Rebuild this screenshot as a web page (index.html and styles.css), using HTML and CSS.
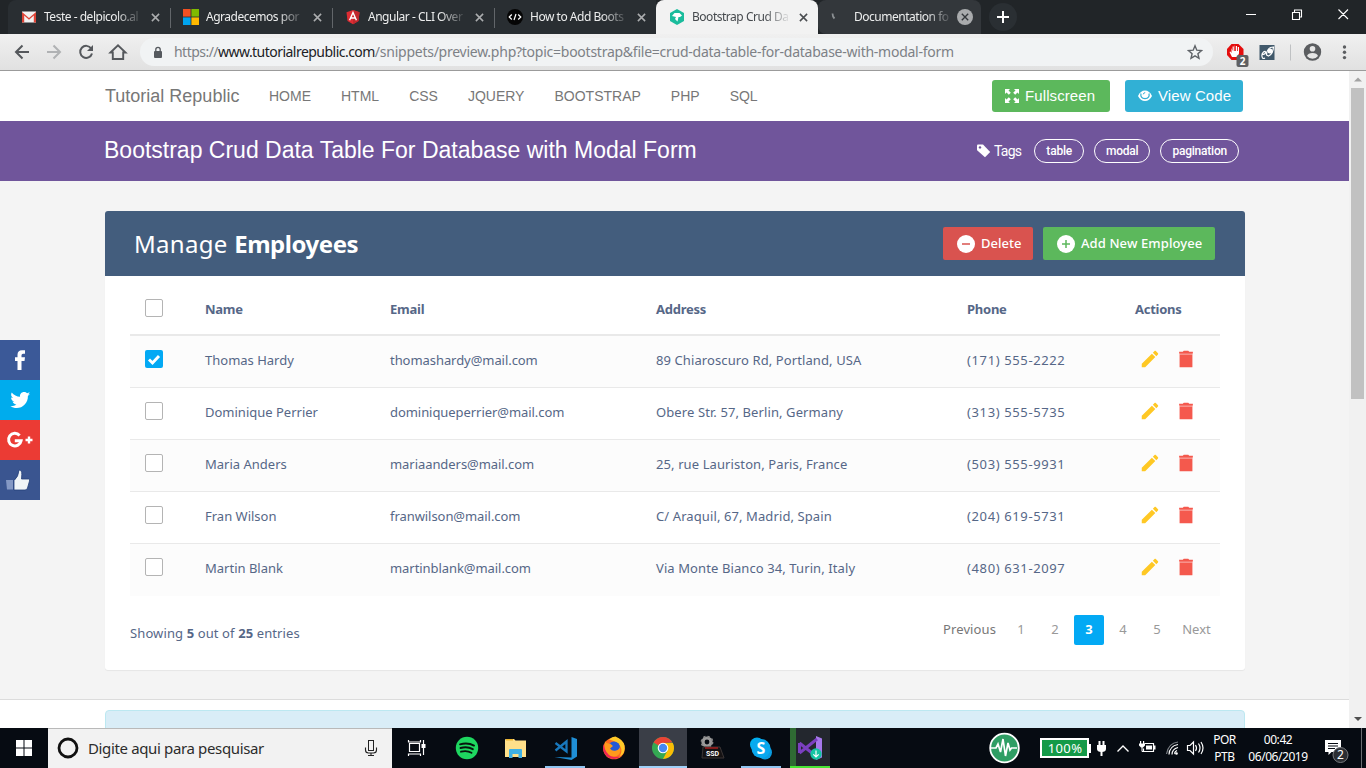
FILE: index.html
```html
<!DOCTYPE html>
<html lang="pt-BR">
<head>
<meta charset="utf-8">
<title>Bootstrap Crud Data Table</title>
<link rel="stylesheet" href="styles.css">
</head>
<body>
<svg class="defs" aria-hidden="true">
  <symbol id="x" viewBox="0 0 10 10"><path d="M1 1l8 8M9 1l-8 8" fill="none" stroke="currentColor" stroke-width="1.7"/></symbol>
  <symbol id="pen" viewBox="0 0 24 24"><path d="M3 17.25V21h3.75L17.81 9.94l-3.75-3.75L3 17.25zM20.71 7.04c.39-.39.39-1.02 0-1.41l-2.34-2.34c-.39-.39-1.02-.39-1.41 0l-1.83 1.83 3.75 3.75 1.83-1.83z"/></symbol>
  <symbol id="bin" viewBox="0 0 24 24"><path d="M5 6v15h14V6zM19.500 4H15.500l-1-1h-5l-1 1H4.500v2h15V4z"/><path d="M5 6h14v1.500H5z" fill="#fff" opacity=".4"/></symbol>
</svg>

<div class="tabs">
  <div class="tab"><svg class="fav" viewBox="0 0 16 16"><path d="M1 2.500h14v11H1z" fill="#f2f2f2"/><path d="M1 13.500V3l7 6 7-6v10.500h-2.200V6.500L8 10.700 3.200 6.500v7z" fill="#dc4437"/></svg><span class="tt">Teste - delpicolo.al</span><svg class="tx"><use href="#x"/></svg></div>
  <div class="tab sep"><svg class="fav" viewBox="0 0 16 16"><path d="M0 0h7.600v7.600H0z" fill="#f25022"/><path d="M8.400 0H16v7.600H8.400z" fill="#7fba00"/><path d="M0 8.400h7.600V16H0z" fill="#00a4ef"/><path d="M8.400 8.400H16V16H8.400z" fill="#ffb900"/></svg><span class="tt">Agradecemos por</span><svg class="tx"><use href="#x"/></svg></div>
  <div class="tab sep"><svg class="fav" viewBox="0 0 16 16"><path d="M8 1l6.500 2.300-1 8.700L8 15.200 2.500 12l-1-8.700z" fill="#dd2c33"/><path d="M8 1l6.500 2.300-1 8.700L8 15.200z" fill="#c1272d"/><path d="M4.600 11.300L8 3.500l3.400 7.800M5.900 9h4.200" fill="none" stroke="#fff" stroke-width="1.400"/></svg><span class="tt">Angular - CLI Over</span><svg class="tx"><use href="#x"/></svg></div>
  <div class="tab sep"><svg class="fav" viewBox="0 0 16 16"><circle cx="8" cy="8" r="8" fill="#050505"/><path d="M4.800 5.500L2.200 8l2.600 2.500M11.200 5.500L13.800 8l-2.600 2.500M9 5l-2 6" fill="none" stroke="#fff" stroke-width="1.200"/></svg><span class="tt">How to Add Boots</span><svg class="tx"><use href="#x"/></svg></div>
  <div class="tab active"><svg class="fav" viewBox="0 0 16 16"><path d="M8 0l7 4v8l-7 4-7-4V4z" fill="#1abc9c"/><path d="M3 7l2.500-3h5L13 6.500l-2 1.500H9.500l-1 4.500L6 10l1-2z" fill="#fff"/></svg><span class="tt">Bootstrap Crud Da</span><svg class="tx"><use href="#x"/></svg></div>
  <div class="tab last"><svg class="fav" viewBox="0 0 16 16"><path d="M1.500 4.500q0 3 2 5" fill="none" stroke="#8b8f92" stroke-width="1.800"/></svg><span class="tt">Documentation fo</span><span class="xc"><svg><use href="#x"/></svg></span></div>
  <div class="plus"><svg viewBox="0 0 28 28"><path d="M14 8v12M8 14h12" stroke="#fff" stroke-width="2"/></svg></div>
  <svg class="winbtns" viewBox="0 0 108 20"><path d="M0 10.500h10M46.500 8.500h7v7h-7zM48.500 8v-2h7v7h-2M92.500 5.500l9.500 9.500M102 5.500L92.500 15" fill="none" stroke="#fff" stroke-width="1.100"/></svg>
</div>

<div class="toolbar">
  <svg class="navs" viewBox="0 0 132 32" fill="none" stroke-width="2">
    <path d="M29 16H16M22.500 9.500L16 16l6.500 6.500" stroke="#55585c"/>
    <path d="M47 16h13M53.500 9.500L60 16l-6.500 6.500" stroke="#b0b2b4"/>
    <path d="M91.200 12.500A6 6 0 1 0 92 17.500" stroke="#55585c"/><path d="M93 9v6h-6z" fill="#55585c"/>
    <path d="M110.500 16.500L118 9.300l7.500 7.200h-2.300V23h-10.400v-6.500z" stroke="#55585c" stroke-width="1.900"/>
  </svg>
  <div class="url">
    <svg class="lock" viewBox="0 0 10 13"><rect x="1" y="5" width="8" height="7" rx="1" fill="#55595e"/><path d="M2.800 6V3.500a2.200 2.200 0 0 1 4.400 0V6" fill="none" stroke="#55595e" stroke-width="1.300"/></svg>
    <span class="addr"><span class="host"><span class="dim">https://</span>www.tutorialrepublic.com</span><span class="dim">/snippets/preview.php?topic=bootstrap&amp;file=crud-data-table-for-database-with-modal-form</span></span>
    <svg class="star" viewBox="0 0 16 16"><path d="M8 1.800l1.800 4.400 4.700.4-3.600 3.100 1.100 4.600L8 11.900l-4 2.400 1.100-4.600-3.600-3.100 4.700-.4z" fill="none" stroke="#5f6368" stroke-width="1.400"/></svg>
  </div>
  <svg class="exts" viewBox="0 0 153 34">
    <g transform="translate(11 0)"><path d="M7.500 9h7l5 5v6l-5 5h-7l-4.500-5v-6z" fill="#e40d0d"/><path d="M7.500 13v5l-1-1.500-1 .5 2.500 5h5l2-3.500V12h-1.200v4h-.8v-5h-1.200v5h-.8v-5.500H10.700V16h-.9v-4.500H8.600V16z" fill="#fff"/></g>
    <g transform="translate(12.500 0)"><rect x="11" y="20" width="12" height="12" rx="2" fill="#5f6063"/><text x="17" y="30" class="bdg">2</text>
    <rect x="34" y="10" width="15" height="15" fill="#41596b"/><path d="M36 19.500q4 0 4-2t-2-.5-1.500 4.500 3 1.500M41 20c0-5 3-8 7-8-.500 5-2 8-5 9z" fill="none" stroke="#fff" stroke-width="1.200"/><circle cx="44.500" cy="16" r="2.500" fill="#fff"/></g>
    <path d="M77.500 9.500v16" stroke="#bfc1c3"/>
    <circle cx="99.500" cy="17" r="8.700" fill="#5b5d60"/><circle cx="99.500" cy="13.800" r="2.800" fill="#e6e6e6"/><path d="M94 21q1-3 5.500-3t5.500 3q-2 2.700-5.500 2.700T94 21z" fill="#e6e6e6"/>
    <g fill="#5b5d60"><circle cx="131.500" cy="12" r="1.700"/><circle cx="131.500" cy="17.300" r="1.700"/><circle cx="131.500" cy="22.600" r="1.700"/></g>
  </svg>
</div>

<div class="viewport">
  <div class="page">
    <nav class="topnav">
      <span class="brand">Tutorial Republic</span>
      <span class="links"><a>HOME</a><a>HTML</a><a>CSS</a><a>JQUERY</a><a>BOOTSTRAP</a><a>PHP</a><a>SQL</a></span>
      <span class="btn green"><svg viewBox="0 0 14 14"><path d="M0 0h5L3.500 1.500l2.300 2.300-2 2L1.500 3.500 0 5zM14 0v5l-1.500-1.500-2.300 2.300-2-2 2.300-2.300L9 0zM0 14V9l1.500 1.500 2.300-2.300 2 2-2.300 2.300L5 14zM14 14H9l1.500-1.500-2.300-2.300 2-2 2.300 2.300L14 9z" fill="#fff"/></svg>Fullscreen</span>
      <span class="btn blue"><svg viewBox="0 0 14 14"><path d="M0 7q2.500-5.500 7-5.500T14 7q-2.500 5-7 5T0 7z" fill="#fff"/><path d="M3 4.500Q2 9 7 9.700 12 9 11 4.500" fill="none" stroke="#31b0d5" stroke-width="1.200"/><path d="M5.300 5.300q.2-1.600 1.900-1.700" fill="none" stroke="#31b0d5" stroke-width="1"/></svg>View Code</span>
    </nav>
    <header class="hero">
      <h1>Bootstrap Crud Data Table For Database with Modal Form</h1>
      <div class="tags"><svg viewBox="0 0 14 14"><path d="M0 1.500Q0 .5 1 .5h5L13.200 8 8 13.300.4 6.400Q0 6 0 5.500z" fill="#fff"/><circle cx="3" cy="3.400" r="1.200" fill="#70559b"/></svg><span class="tl">Tags</span><span class="pill">table</span><span class="pill">modal</span><span class="pill">pagination</span></div>
    </header>
    <main class="stage">
      <section class="card">
        <div class="cardhead">
          <h2>Manage <b>Employees</b></h2>
          <span class="act red"><svg viewBox="0 0 18 18"><circle cx="9" cy="9" r="9" fill="#fff"/><path d="M5 9h8" stroke="#d9534f" stroke-width="1.500"/></svg><span>Delete</span></span>
          <span class="act grn"><svg viewBox="0 0 18 18"><circle cx="9" cy="9" r="9" fill="#fff"/><path d="M5 9h8M9 5v8" stroke="#5cb85c" stroke-width="1.500"/></svg><span>Add New Employee</span></span>
        </div>
        <table>
          <colgroup><col class="c1"><col class="c2"><col class="c3"><col class="c4"><col class="c5"><col class="c6"></colgroup>
          <thead><tr><th><i class="cb"></i></th><th>Name</th><th>Email</th><th>Address</th><th>Phone</th><th>Actions</th></tr></thead>
          <tbody>
            <tr><td><i class="cb on"><svg viewBox="0 0 18 18"><path d="M4 9.500l3.500 3.500L14 6" fill="none" stroke="#fff" stroke-width="2.900"/></svg></i></td><td>Thomas Hardy</td><td>thomashardy@mail.com</td><td>89 Chiaroscuro Rd, Portland, USA</td><td>(171) 555-2222</td><td><svg class="pen"><use href="#pen"/></svg><svg class="bin"><use href="#bin"/></svg></td></tr>
            <tr><td><i class="cb"></i></td><td>Dominique Perrier</td><td>dominiqueperrier@mail.com</td><td>Obere Str. 57, Berlin, Germany</td><td>(313) 555-5735</td><td><svg class="pen"><use href="#pen"/></svg><svg class="bin"><use href="#bin"/></svg></td></tr>
            <tr><td><i class="cb"></i></td><td>Maria Anders</td><td>mariaanders@mail.com</td><td>25, rue Lauriston, Paris, France</td><td>(503) 555-9931</td><td><svg class="pen"><use href="#pen"/></svg><svg class="bin"><use href="#bin"/></svg></td></tr>
            <tr><td><i class="cb"></i></td><td>Fran Wilson</td><td>franwilson@mail.com</td><td>C/ Araquil, 67, Madrid, Spain</td><td>(204) 619-5731</td><td><svg class="pen"><use href="#pen"/></svg><svg class="bin"><use href="#bin"/></svg></td></tr>
            <tr><td><i class="cb"></i></td><td>Martin Blank</td><td>martinblank@mail.com</td><td>Via Monte Bianco 34, Turin, Italy</td><td>(480) 631-2097</td><td><svg class="pen"><use href="#pen"/></svg><svg class="bin"><use href="#bin"/></svg></td></tr>
          </tbody>
        </table>
        <div class="foot">
          <span class="hint">Showing <b>5</b> out of <b>25</b> entries</span>
          <div class="pager"><span class="prev">Previous</span><span>1</span><span>2</span><span class="cur">3</span><span>4</span><span>5</span><span class="next">Next</span></div>
        </div>
      </section>
    </main>
    <div class="below"><div class="info"></div></div>
    <div class="social">
      <span class="fb"><svg viewBox="0 0 40 40"><path d="M17.500 30v-9H15v-3.700h2.500v-2.500q0-4.600 4.500-4.600h3v3.600h-2q-1.500 0-1.500 1.500v2H25l-.5 3.700h-3v9z" fill="#fff"/></svg></span>
      <span class="tw"><svg viewBox="0 0 40 40"><path d="M30 13.800l-2.100 2.100c.2 6.800-5 12.100-11.200 12.100-2.300 0-4.500-.6-6.300-1.800 2.200.2 4.300-.4 6-1.700-1.800-.1-3.300-1.200-3.800-2.900.6.1 1.200.1 1.800-.1-2-.4-3.300-2-3.300-4.100.6.300 1.200.5 1.900.5-1.900-1.300-2.400-3.600-1.300-5.400 2.100 2.600 5 4.100 8.400 4.300-.6-2.600 1.300-4.900 4-4.900 1.200 0 2.200.5 3 1.300l2.600-1c-.3 1-1 1.700-1.800 2.200z" fill="#fff"/></svg></span>
      <span class="gp"><svg viewBox="0 0 40 40" fill="none" stroke="#fff"><path d="M19.600 15.400a6.300 6.300 0 1 0 1.500 5.300h-6.300" stroke-width="3"/><path d="M25.500 20h7M29 16.500v7" stroke-width="2.400"/></svg></span>
      <span class="lk"><svg viewBox="0 0 40 40"><path d="M6 20h7v9.500H7z" fill="#8498c4"/><path d="M14 20.500q4.500-3.500 5-10.500 3 0 2.800 4.500L21.500 19h7q1.500 0 1 2l-2 7q-.5 2-2.500 2H14z" fill="#f1f5f7" stroke="#25407a" stroke-width=".8"/></svg></span>
    </div>
  </div>
  <div class="scroll"><svg viewBox="0 0 17 17"><path d="M5 10.500L9 6.500l4 4z" fill="#a3a3a3"/></svg><i></i><svg viewBox="0 0 17 17"><path d="M5 6l4 4 4-4z" fill="#505050"/></svg></div>
</div>

<div class="taskbar">
  <div class="start"><svg viewBox="0 0 16 16"><path d="M0 0h7.500v7.500H0zM8.500 0H16v7.500H8.500zM0 8.500h7.500V16H0zM8.500 8.500H16V16H8.500z" fill="#fff"/></svg></div>
  <div class="search"><svg class="ring" viewBox="0 0 22 22"><circle cx="11" cy="11" r="9" fill="none" stroke="#111" stroke-width="2.800"/></svg><span>Digite aqui para pesquisar</span><svg class="mic" viewBox="0 0 14 18"><rect x="4.500" y="1.500" width="5" height="10" fill="none" stroke="#222"/><path d="M1.500 8.500v2.500q0 3 3 3h5q3 0 3-3V8.500M7 14v3M4 16.500h6" fill="none" stroke="#222" stroke-width="1.100"/></svg></div>
  <svg class="apps" viewBox="392 728 440 40">
    <g fill="none" stroke="#fff" stroke-width="1.200"><path d="M409.500 743.500h10v8h-10zM408.500 740v2h12v-2M408.500 756v-2h12v2M423.500 740v15"/></g><path d="M421.500 744h4v4h-4z" fill="#fff"/>
    <circle cx="467" cy="748" r="11.200" fill="#1ed760"/><path d="M460 744.300q8-2.200 14 1.300M460.500 748q7-1.800 12.300 1.200M461 751.700q6-1.500 10.500 1.100" fill="none" stroke="#07140c" stroke-width="1.900" stroke-linecap="round"/>
    <path d="M505 740q0-1 1-1h8l1.500 1.500H526V757h-21z" fill="#ffe08a"/><path d="M506 739h7v1.500h-7z" fill="#efb72f"/><path d="M509 758v-8q0-1 1-1h11q1 0 1 1v8h-3.500v-4h-6v4z" fill="#3fb1e5"/>
    <path d="M571.500 737l5.500 2v17.500l-5.500 3.500-17-3 17 .5z" fill="#1f8fd6"/><path d="M555.500 743l11 8.500V741.500L555.500 750.500" fill="none" stroke="#1878bd" stroke-width="2.300"/>
    <path d="M545 766h40v2h-40zM741 766h40v2h-40z" fill="#8fc4f0"/>
    <circle cx="614" cy="748.500" r="10.800" fill="#ff6a1f"/><path d="M609 739.500q3-3 6.500-3 7.500 3 9 9 1.500 8-6 12.300 5-6 1.500-12-2-4-11-6.300z" fill="#ffc928"/><circle cx="614" cy="747.500" r="6" fill="#2459d6"/><path d="M605 741q1 3 5 2.500l3 2.500-3 2.500q2 3 6 2 3.500-1 4-4 2 9-6 10-9 0-9.500-9z" fill="#ff9a1c"/><path d="M603.500 744q-2 8 4 13 8 4.500 14-1.500-4 2.500-10 1-6-2.500-8-12.500z" fill="#ee2555"/>
    <path d="M639 728h48v40h-48z" fill="#3a3e47"/><path d="M639 766h48v2h-48z" fill="#9fd0f8"/>
    <circle cx="663" cy="748" r="11" fill="#34a853"/><path d="M663 748l-9.500-5.500A11 11 0 0 1 672.500 742.500L663 743z" fill="#ea4335"/><path d="M663 743h9.800A11 11 0 0 1 663 759l4.500-8.500z" fill="#fbbc05"/><circle cx="663" cy="748" r="5.300" fill="#fff"/><circle cx="663" cy="748" r="4.200" fill="#4688f4"/>
    <circle cx="707" cy="742" r="4" fill="none" stroke="#9a9a9a" stroke-width="3.200"/><circle cx="707" cy="742" r="5.500" fill="none" stroke="#8a8a8a" stroke-width="1.800" stroke-dasharray="2.200 2.100"/><path d="M703 747h17l4 11h-22z" fill="#151213" stroke="#3a3535"/><path d="M705 748h13" stroke="#bb2020" stroke-width="1.300"/><text x="712.500" y="756" class="ssd">SSD</text>
    <circle cx="757" cy="744.500" r="7" fill="#00aff0"/><circle cx="765" cy="752.500" r="7" fill="#0a9be0"/><circle cx="761" cy="748.500" r="9.500" fill="#09a8ee"/><text x="761" y="754" class="sk">S</text>
    <path d="M790 728h40v40h-40z" fill="#23272e"/><path d="M790 728h6v40h-6z" fill="#2f6a33"/><path d="M790 766h40v2h-40z" fill="#47e534"/>
    <path d="M816 736l6 2.500v19l-6 2.500z" fill="#a678ec"/><path d="M799.500 743v10M799.500 753L817 739M799.500 743L817 757" fill="none" stroke="#7b3fc0" stroke-width="3"/><circle cx="816" cy="754" r="5.700" fill="#14c5a3"/><path d="M816 750.500v6M813.300 754.300l2.700 2.700 2.700-2.700" fill="none" stroke="#fff" stroke-width="1.200"/>
  </svg>
  <svg class="tray" viewBox="984 728 222 40">
    <circle cx="1004.500" cy="748" r="14.300" fill="#2f9e64" stroke="#fff" stroke-width="1.800"/><path d="M991 748h5l2-4 2.500 8 2.500-13 2.500 17 2.500-13 2 7 1.500-2h5.500" fill="none" stroke="#fff" stroke-width="1.700"/>
    <path d="M1041 739h47v18h-47z" fill="#149a48" stroke="#fff" stroke-width="2"/><path d="M1089 744h2v9h-2z" fill="#fff"/><text x="1065" y="753" class="pct">100%</text>
    <path d="M1099.500 741v5M1103.500 741v5M1101.500 750v6" stroke="#fff" stroke-width="2"/><path d="M1097 745h9v4q0 3-4.500 3t-4.500-3z" fill="#fff"/>
    <path d="M1117.500 751.500l5.500-5.500 5.500 5.500" fill="none" stroke="#fff" stroke-width="1.400"/>
    <path d="M1144.500 743.500h9v8h-10v-3" fill="none" stroke="#fff" stroke-width="1.200"/><path d="M1146 745.500h6v4h-6zM1154 745.500h1.500v4h-1.500zM1139 743.500h6v2l-2 2h-2l-2-2zM1140 741h1.200v3H1140zM1143 741h1.200v3H1143z" fill="#fff"/><path d="M1142 746v5.500h2" fill="none" stroke="#fff"/>
    <g fill="none" stroke="#fff" stroke-width="1.200"><path d="M1175 754q-1-2 2-3.500M1172 754.500q0-5.500 6-7M1169 754.500q.5-8.500 9-10" /><path d="M1166.500 754q2-11 11.500-12" stroke="#7c8086"/><path d="M1187.500 745.500h2.500l3.500-3.500v12l-3.500-3.500h-2.500zM1195.500 745q2 3 0 6M1198.500 743.500q3 4.500 0 9M1201 742q4 6 0 12"/></g><circle cx="1176.500" cy="753.500" r="1.300" fill="#fff"/>
  </svg>
  <div class="lang"><span>POR</span><span>PTB</span></div>
  <div class="clock"><span>00:42</span><span>06/06/2019</span></div>
  <div class="note"><svg viewBox="0 0 26 26"><path d="M1 3h16v12h-9.500L4.500 18v-3H1z" fill="#fff"/><path d="M4 6.500h10M4 9h10M4 11.500h7" stroke="#060b12" stroke-width="1.100"/><circle cx="16.500" cy="18" r="7.500" fill="#2b2e33" stroke="#777a7e"/><text x="16.500" y="22" class="nb">2</text></svg></div>
</div>
</body>
</html>
```
FILE: styles.css
```css
* { box-sizing: border-box; }
body { margin: 0; width: 1366px; height: 768px; overflow: hidden; display: flex; flex-direction: column; font-family: "Liberation Sans", Arial, sans-serif; background: #fff; }
svg { display: block; flex: none; }
.defs { position: absolute; width: 0; height: 0; }
h1, h2 { margin: 0; font-weight: 400; }

/* browser tabs */
.tabs { height: 34px; flex: none; background: #212528; display: flex; padding-left: 8px; font: 12px/34px "Noto Sans", sans-serif; letter-spacing: -0.48px; color: #eceded; }
.tab { width: 162px; height: 34px; display: flex; align-items: center; padding-left: 13px; background: #292e32; position: relative; }
.tab:first-child { border-radius: 8px 0 0 0; }
.tab.sep::before { content: ""; position: absolute; left: 0; top: 8px; width: 1px; height: 20px; background: #62666a; }
.fav { width: 16px; height: 16px; margin-right: 7px; }
.tt { width: 100px; height: 34px; white-space: nowrap; -webkit-mask-image: linear-gradient(90deg, #000 72%, transparent 99%); mask-image: linear-gradient(90deg, #000 72%, transparent 99%); }
.tx { width: 9px; height: 9px; margin-left: 7px; color: #abadaf; }
.tab.active { background: #f2f2f2; color: #45494d; border-radius: 8px 8px 0 0; }
.tab.active .tx { color: #4a4d50; }
.tab.last { background: #33373b; width: 163px; border-radius: 8px 8px 0 8px; }
.xc { width: 16px; height: 16px; border-radius: 50%; background: #a9abad; margin-left: 3px; display: grid; place-items: center; color: #33373b; }
.xc svg { width: 8px; height: 8px; }
.plus { width: 28px; height: 28px; margin: 3px 0 0 8px; border-radius: 50%; background: #2a2f33; }
.winbtns { width: 108px; height: 20px; margin: 4px 12px 0 auto; }

/* toolbar */
.toolbar { height: 37px; flex: none; display: flex; align-items: center; background: linear-gradient(#f0f0f0, #e1e1e1); border-bottom: 1px solid #9b9b9b; }
.navs { width: 132px; height: 32px; }
.url { margin-left: 8px; width: 1073px; height: 28px; border-radius: 14px; background: #f1f3f4; display: flex; align-items: center; padding: 0 10px 0 13px; font: 14px/28px "Noto Sans", sans-serif; color: #202124; }
.lock { width: 10px; height: 13px; }
.addr { margin-left: 11px; flex: 1; letter-spacing: -0.25px; white-space: nowrap; }
.host { letter-spacing: -0.53px; }
.dim { color: #7d8186; }
.star { width: 16px; height: 16px; }
.exts { width: 153px; height: 34px; }
.bdg { font: 700 10px "Noto Sans", sans-serif; fill: #fff; text-anchor: middle; letter-spacing: 0; }

/* page */
.viewport { flex: 1; display: flex; min-height: 0; overflow: hidden; }
.page { width: 1349px; height: 657px; position: relative; overflow: hidden; }
.scroll { width: 17px; background: #f1f1f1; display: flex; flex-direction: column; }
.scroll svg { width: 17px; height: 17px; }
.scroll i { width: 13px; height: 311px; margin: 0 0 auto 2px; background: #c1c1c1; }
.topnav { height: 50px; padding: 0 106px 0 105px; display: flex; align-items: center; color: #777; }
.brand { font-size: 18px; width: 149px; }
.links { display: flex; font-size: 14px; margin-right: auto; }
.links a { padding: 0 15px; }
.btn { width: 118px; height: 32px; border-radius: 3px; color: #fff; font-size: 15px; line-height: 31px; letter-spacing: .1px; display: flex; align-items: center; padding: 0 0 1px 13px; white-space: nowrap; }
.btn svg { width: 14px; height: 14px; margin-right: 6px; }
.btn.green { background: #5cb85c; margin-right: 15px; }
.btn.blue { background: #31b0d5; }
.hero { height: 60px; background: #70559b; color: #fff; padding: 0 110px 0 104px; display: flex; align-items: center; justify-content: space-between; }
.hero h1 { font-size: 23px; line-height: 28px; margin-bottom: 2px; white-space: nowrap; }
.tags { display: flex; align-items: center; }
.tags svg { width: 14px; height: 14px; margin-right: 3px; }
.tl { font: 14px Roboto, sans-serif; letter-spacing: -.7px; margin-right: 3px; }
.pill { height: 24px; border: 1px solid #fff; border-radius: 12px; padding: 0 11px; margin-left: 10px; font: 500 12px/22px Roboto, sans-serif; letter-spacing: -.22px; }
.stage { height: 518px; background: #f4f4f4; padding: 30px 104px 0 105px; }
.card { height: 459px; background: #fff; border-radius: 3px; box-shadow: 0 1px 1px rgba(0,0,0,.06); font-family: "Noto Sans", sans-serif; font-size: 13px; color: #566787; }
.cardhead { height: 65px; background: #435d7d; border-radius: 3px 3px 0 0; padding: 0 30px 0 29px; color: #fff; display: flex; align-items: center; }
.cardhead h2 { font-size: 24px; margin: 0 auto 1px 0; letter-spacing: .3px; }
.cardhead b { letter-spacing: -.45px; }
.act { height: 33px; border-radius: 2px; display: flex; align-items: center; padding-left: 14px; font-weight: 500; white-space: nowrap; }
.act span { margin-bottom: 2px; }
.act svg { width: 18px; height: 18px; margin-right: 6px; }
.act.red { width: 90px; background: #d9534f; margin-right: 10px; }
.act.grn { width: 172px; background: #5cb85c; letter-spacing: .1px; }
table { table-layout: fixed; width: 1090px; margin: 10px 0 0 25px; border-collapse: separate; border-spacing: 0; }
.c1 { width: 60px; } .c2 { width: 185px; } .c3 { width: 266px; } .c4 { width: 311px; } .c5 { width: 168px; } .c6 { width: 100px; }
th, td { text-align: left; padding: 0 0 4px 15px; white-space: nowrap; vertical-align: middle; line-height: 18px; }
th { height: 50px; border-bottom: 2px solid #e9e9e9; padding-bottom: 3px; letter-spacing: -.25px; }
td { height: 52px; border-bottom: 1px solid #e9e9e9; }
tbody tr:nth-child(odd) { background: #fcfcfc; }
tbody tr:last-child td { border-bottom-color: transparent; }
td:nth-child(3) { letter-spacing: -.06px; }
td:nth-child(4) { letter-spacing: .1px; }
td:nth-child(5) { letter-spacing: .62px; }
.cb { display: block; width: 18px; height: 18px; border: 1px solid #b4b4b4; border-radius: 2px; background: #fff; margin-bottom: 2px; }
.cb.on { background: #03a9f4; border: 0; }
.cb svg { width: 18px; height: 18px; }
td:last-child svg { display: inline-block; width: 22px; height: 22px; margin: 0 0 1px 4px; vertical-align: middle; }
.pen { fill: #ffc107; opacity: .88; }
.bin { fill: #f44336; opacity: .88; }
td:last-child svg.bin { margin-left: 14px; }
.foot { display: flex; justify-content: space-between; padding: 19px 34px 0 25px; }
.hint { margin-top: 9px; letter-spacing: .11px; }
.pager { display: flex; color: #999; line-height: 28px; }
.pager span { width: 30px; height: 30px; margin-right: 4px; text-align: center; }
.pager .prev { width: 53px; margin-right: 10px; color: #777; letter-spacing: .1px; }
.pager .cur { background: #03a9f4; color: #fff; font-weight: 700; border-radius: 2px; }
.pager .next { width: 29px; margin: 0 0 0 6px; }
.below { border-top: 1px solid #dcdcdc; padding: 10px 104px 0 105px; }
.info { height: 60px; background: #d9edf7; border: 1px solid #bce8f1; border-radius: 4px; }
.social { position: absolute; left: 0; top: 269px; width: 40px; }
.social span, .social svg { display: block; width: 40px; height: 40px; }
.fb { background: #3b5998; } .tw { background: #00aced; } .gp { background: #eb3b34; } .lk { background: #3a5590; }

/* taskbar */
.taskbar { height: 40px; flex: none; background: #060b12; display: flex; color: #fff; font: 12px/16px "Noto Sans", sans-serif; }
.start { width: 48px; display: grid; place-items: center; }
.start svg { width: 16px; height: 16px; }
.search { width: 344px; background: #f2f2f2; border-top: 1px solid #b9b9b9; display: flex; align-items: center; padding: 0 14px 2px 9px; color: #2c2c2c; font-size: 15px; letter-spacing: -.36px; }
.ring { width: 22px; height: 22px; margin-right: 9px; }
.mic { width: 14px; height: 18px; margin-left: auto; }
.apps { width: 440px; height: 40px; }
.ssd { font: 700 7px Roboto, sans-serif; fill: #fff; text-anchor: middle; }
.sk { font: 700 16px "Open Sans", sans-serif; fill: #fff; text-anchor: middle; }
.tray { width: 222px; height: 40px; margin-left: 152px; }
.pct { font: 13px "Noto Sans", sans-serif; letter-spacing: .4px; fill: #fff; text-anchor: middle; }
.lang, .clock { display: flex; flex-direction: column; padding-top: 3px; text-align: center; letter-spacing: -.45px; line-height: 17px; }
.lang { margin-left: 7px; width: 23px; }
.clock { margin-left: 12px; width: 60px; }
.note { margin-left: 16px; width: 38px; border-right: 1px solid #6a6d71; padding-top: 9px; }
.note svg { width: 26px; height: 26px; }
.nb { font: 12px "Noto Sans", sans-serif; fill: #fff; text-anchor: middle; }
```
